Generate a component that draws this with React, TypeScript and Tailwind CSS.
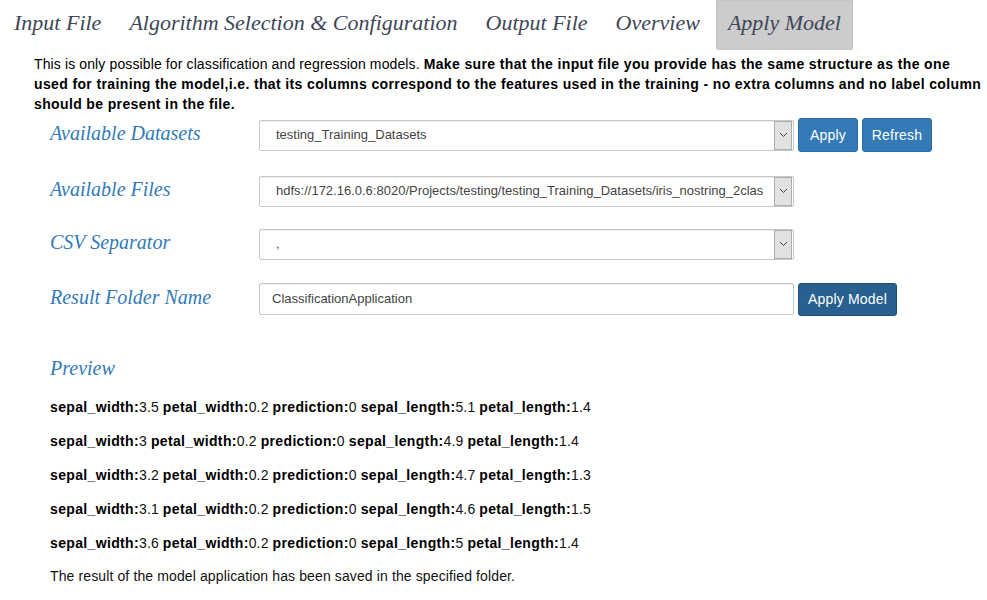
import React from "react";

const serif = { fontFamily: '"Liberation Serif", "DejaVu Serif", serif' };

function Chevron() {
  return (
    <svg width="9" height="6" viewBox="0 0 9 6" className="block">
      <path d="M1 1 L4.5 4.5 L8 1" fill="none" stroke="#444" strokeWidth="1" />
    </svg>
  );
}

function Select({ value, muted }: { value: string; muted?: boolean }) {
  return (
    <div className="w-[535px] h-[31px] border border-[#c8c8c8] rounded-[2px] bg-white flex items-center shadow-[inset_0_1px_1px_rgba(0,0,0,0.075)]">
      <div
        className={
          "flex-1 pl-[16px] pr-[3px] text-[13px] whitespace-nowrap overflow-hidden " +
          (muted ? "text-[#555]" : "text-[#444]")
        }
      >
        {value}
      </div>
      <div className="w-[18px] h-[29px] mr-[1px] shrink-0 bg-[#e1e1e1] border border-[#adadad] flex items-center justify-center">
        <Chevron />
      </div>
    </div>
  );
}

function Label({ children }: { children: React.ReactNode }) {
  return (
    <div className="w-[259px] pl-[50px] shrink-0 italic text-[20px] text-[#337ab7] leading-none -mt-[4px]" style={serif}>
      {children}
    </div>
  );
}

const rows = [
  ["3.5", "0.2", "0", "5.1", "1.4"],
  ["3", "0.2", "0", "4.9", "1.4"],
  ["3.2", "0.2", "0", "4.7", "1.3"],
  ["3.1", "0.2", "0", "4.6", "1.5"],
  ["3.6", "0.2", "0", "5", "1.4"],
];

function K({ children }: { children: React.ReactNode }) {
  return <b className="text-black tracking-[0.35px]">{children}</b>;
}

export default function App() {
  const tabs = ["Input File", "Algorithm Selection & Configuration", "Output File", "Overview", "Apply Model"];
  return (
    <div className="w-[987px] h-[600px] bg-white overflow-hidden" style={{ fontFamily: '"Liberation Sans", Arial, sans-serif' }}>
      <div className="flex pl-[2px] h-[50px]">
        {tabs.map((t) => (
          <div
            key={t}
            className={
              "px-[12px] mr-[4px] h-[50px] flex items-center italic text-[22px] text-[#3e4657] rounded-b-[3px] " +
              (t === "Apply Model" ? "bg-[#cccccc] shadow-[inset_0_0_2px_rgba(0,0,0,0.15)]" : "")
            }
            style={serif}
          >
            <span className="-mt-[6px]">{t}</span>
          </div>
        ))}
      </div>
      <p className="pl-[34px] text-[14px] leading-[20px] text-black mt-[4px] whitespace-nowrap">
        <span className="tracking-[0.12px]">This is only possible for classification and regression models.</span>{" "}
        <b className="tracking-[0.37px]">Make sure that the input file you provide has the same structure as the one</b>
        <br />
        <b className="tracking-[0.37px]">
          used for training the model,i.e. that its columns correspond to the features used in the training - no extra
          columns and no label column
        </b>
        <br />
        <b className="tracking-[0.37px]">should be present in the file.</b>
      </p>

      <div className="flex items-center h-[34px] mt-[4px]">
        <Label>Available Datasets</Label>
        <Select value="testing_Training_Datasets" />
        <button className="ml-[4px] w-[60px] h-[34px] bg-[#337ab7] border border-[#2e6da4] rounded-[3px] text-white text-[14px] tracking-[0.2px]">
          Apply
        </button>
        <button className="ml-[4px] w-[70px] h-[34px] bg-[#337ab7] border border-[#2e6da4] rounded-[3px] text-white text-[14px] tracking-[0.2px]">
          Refresh
        </button>
      </div>

      <div className="flex items-center h-[34px] mt-[22px]">
        <Label>Available Files</Label>
        <Select value="hdfs://172.16.0.6:8020/Projects/testing/testing_Training_Datasets/iris_nostring_2clas" />
      </div>

      <div className="flex items-center h-[34px] mt-[19px]">
        <Label>CSV Separator</Label>
        <Select value="," muted />
      </div>

      <div className="flex items-center h-[34px] mt-[21px]">
        <Label>Result Folder Name</Label>
        <div className="w-[535px] h-[32px] border border-[#c8c8c8] rounded-[2px] bg-white flex items-center pl-[12px] text-[13px] text-[#444] shadow-[inset_0_1px_1px_rgba(0,0,0,0.075)]">
          ClassificationApplication
        </div>
        <button className="ml-[4px] w-[99px] h-[33px] bg-[#286090] border border-[#204d74] rounded-[3px] text-white text-[14px] tracking-[0.2px]">
          Apply Model
        </button>
      </div>

      <div className="pl-[50px] mt-[42px] italic text-[20px] text-[#337ab7] leading-none" style={serif}>
        Preview
      </div>

      <div className="pl-[50px] mt-[19px] flex flex-col gap-[14px] text-[14px] leading-[20px] text-[#111] whitespace-nowrap">
        {rows.map((r, i) => (
          <div key={i} className="tracking-[0.12px]">
            <K>sepal_width:</K>
            {r[0]} <K>petal_width:</K>
            {r[1]} <K>prediction:</K>
            {r[2]} <K>sepal_length:</K>
            {r[3]} <K>petal_length:</K>
            {r[4]}
          </div>
        ))}
        <div className="-mt-[1px] tracking-[0.12px]">The result of the model application has been saved in the specified folder.</div>
      </div>
    </div>
  );
}
